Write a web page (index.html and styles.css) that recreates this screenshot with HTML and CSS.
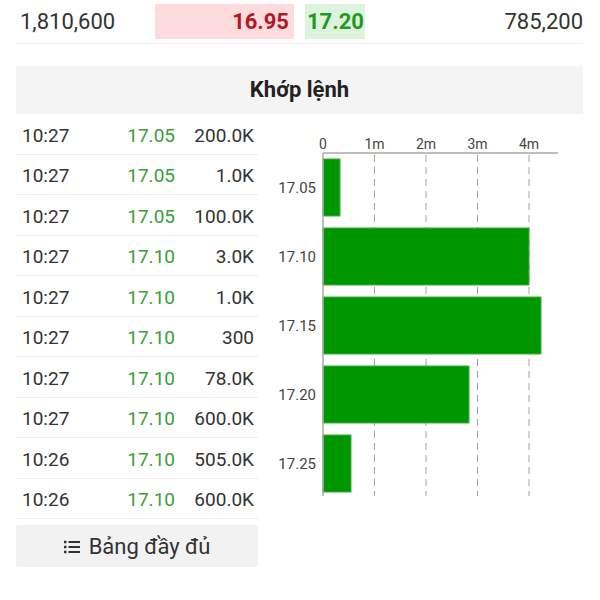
FILE: index.html
```html
<!DOCTYPE html>
<html lang="vi">
<head>
    <meta charset="UTF-8">
    <meta name="viewport" content="width=device-width, initial-scale=1.0">
    <title>Khớp lệnh</title>
    <link rel="stylesheet" href="styles.css">
</head>
<body>
    <div class="page">
        <!-- Best bid / ask row -->
        <div class="quote-row">
            <div class="vol-left">1,810,600</div>
            <div class="bid">16.95</div>
            <div class="ask">17.20</div>
            <div class="vol-right">785,200</div>
        </div>

        <div class="section-title">Khớp lệnh</div>

        <div class="match">
            <div class="trades">
                <div class="trade"><span class="time">10:27</span><span class="price">17.05</span><span class="qty">200.0K</span></div>
                <div class="trade"><span class="time">10:27</span><span class="price">17.05</span><span class="qty">1.0K</span></div>
                <div class="trade"><span class="time">10:27</span><span class="price">17.05</span><span class="qty">100.0K</span></div>
                <div class="trade"><span class="time">10:27</span><span class="price">17.10</span><span class="qty">3.0K</span></div>
                <div class="trade"><span class="time">10:27</span><span class="price">17.10</span><span class="qty">1.0K</span></div>
                <div class="trade"><span class="time">10:27</span><span class="price">17.10</span><span class="qty">300</span></div>
                <div class="trade"><span class="time">10:27</span><span class="price">17.10</span><span class="qty">78.0K</span></div>
                <div class="trade"><span class="time">10:27</span><span class="price">17.10</span><span class="qty">600.0K</span></div>
                <div class="trade"><span class="time">10:26</span><span class="price">17.10</span><span class="qty">505.0K</span></div>
                <div class="trade"><span class="time">10:26</span><span class="price">17.10</span><span class="qty">600.0K</span></div>

                <button class="full-btn" type="button">
                    <svg class="list-icon" width="16" height="14" viewBox="0 0 16 14">
                        <rect x="0" y="0.75" width="2.5" height="2.5" fill="#333"/>
                        <rect x="0" y="5.75" width="2.5" height="2.5" fill="#333"/>
                        <rect x="0" y="10.75" width="2.5" height="2.5" fill="#333"/>
                        <rect x="4.5" y="1" width="11.5" height="2" fill="#333"/>
                        <rect x="4.5" y="6" width="11.5" height="2" fill="#333"/>
                        <rect x="4.5" y="11" width="11.5" height="2" fill="#333"/>
                    </svg>
                    Bảng đầy đủ
                </button>
            </div>

            <!-- Volume by price chart -->
            <div class="chart">
                <svg width="325" height="400" viewBox="0 0 325 400">
                    <g class="grid">
                        <line x1="116.5" y1="41" x2="116.5" y2="382"/>
                        <line x1="168" y1="41" x2="168" y2="382"/>
                        <line x1="219.5" y1="41" x2="219.5" y2="382"/>
                        <line x1="271" y1="41" x2="271" y2="382"/>
                    </g>
                    <g class="bars">
                        <rect x="65" y="45" width="17" height="57"/>
                        <rect x="65" y="114" width="206" height="57"/>
                        <rect x="65" y="183" width="218" height="57"/>
                        <rect x="65" y="252" width="146" height="57"/>
                        <rect x="65" y="321" width="28" height="57"/>
                    </g>
                    <g class="axis">
                        <line x1="65" y1="39" x2="300" y2="39"/>
                        <line x1="65" y1="39" x2="65" y2="382"/>
                    </g>
                    <g class="ticks">
                        <text x="65" y="35">0</text>
                        <text x="116.5" y="35">1m</text>
                        <text x="168" y="35">2m</text>
                        <text x="219.5" y="35">3m</text>
                        <text x="271" y="35">4m</text>
                    </g>
                    <g class="cats">
                        <text x="58" y="79">17.05</text>
                        <text x="58" y="148">17.10</text>
                        <text x="58" y="217">17.15</text>
                        <text x="58" y="286">17.20</text>
                        <text x="58" y="355">17.25</text>
                    </g>
                </svg>
            </div>
        </div>
    </div>
</body>
</html>
```

FILE: styles.css
```css
body {
    margin: 0;
    font-family: Roboto, "Noto Sans", Arial, sans-serif;
    color: #333;
    background: #fff;
}

.page {
    width: 600px;
    padding: 0 17px 0 16px;
    box-sizing: border-box;
}

/* Top quote row */
.quote-row {
    display: flex;
    align-items: center;
    height: 44px;
    box-sizing: border-box;
    border-bottom: 1px solid #f0f0f0;
    font-size: 22px;
}

.vol-left {
    width: 139px;
    padding-left: 4px;
    box-sizing: border-box;
    color: #333;
}

.bid {
    width: 139px;
    height: 35px;
    line-height: 35px;
    padding-right: 5px;
    box-sizing: border-box;
    text-align: right;
    background: #fcdcdc;
    color: #b3162a;
    font-weight: bold;
}

.ask {
    width: 60px;
    height: 35px;
    line-height: 35px;
    margin-left: 11px;
    padding-left: 2px;
    box-sizing: border-box;
    background: #def3de;
    color: #229a22;
    font-weight: bold;
    white-space: nowrap;
}

.vol-right {
    flex: 1;
    text-align: right;
    color: #333;
}

.section-title {
    margin-top: 22px;
    height: 48px;
    line-height: 48px;
    text-align: center;
    background: #f4f4f4;
    font-size: 22px;
    font-weight: bold;
    color: #222;
}

/* Matched orders */
.match {
    display: flex;
}

.trades {
    width: 242px;
}

.trade {
    display: grid;
    grid-template-columns: 1fr 64px 79px;
    align-items: center;
    height: 40.5px;
    padding: 3px 4px 0 6px;
    box-sizing: border-box;
    border-bottom: 1px solid #efefef;
    font-size: 19px;
}

.time {
    color: #333;
}

.price {
    text-align: right;
    color: #3a9e3a;
}

.qty {
    text-align: right;
    color: #333;
}

.full-btn {
    display: flex;
    align-items: center;
    justify-content: center;
    gap: 9px;
    width: 100%;
    height: 42px;
    margin-top: 6px;
    border: none;
    border-radius: 3px;
    background: #f2f2f2;
    font-family: inherit;
    font-size: 22px;
    color: #333;
}

.list-icon {
    margin-top: 1px;
}

.chart {
    flex: 1;
}

.chart svg {
    display: block;
}

.grid line {
    stroke: #a0a0a0;
    stroke-width: 1;
    stroke-dasharray: 7 5;
}

.axis line {
    stroke: #a8a8a8;
    stroke-width: 1.5;
}

.bars rect {
    fill: #009600;
    stroke: #3fae3f;
    stroke-width: 1;
}

.ticks text {
    font-size: 14px;
    fill: #444;
    text-anchor: middle;
}

.cats text {
    font-size: 15px;
    fill: #444;
    text-anchor: end;
}
```
